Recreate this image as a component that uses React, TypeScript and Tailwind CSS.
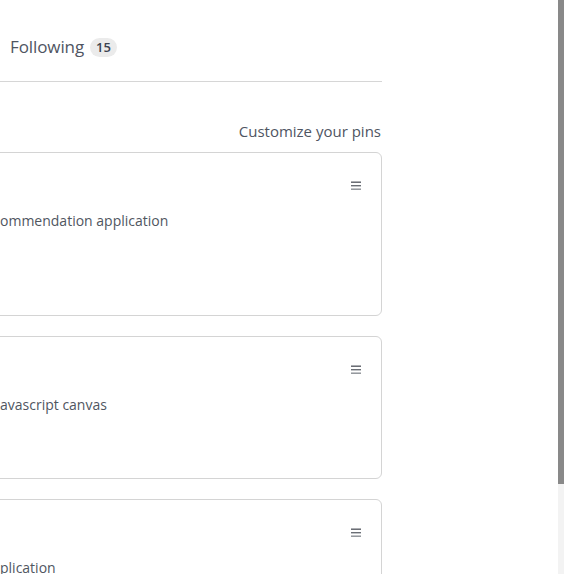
import React from 'react';

const pins = [
  { text: 'ommendation application', height: 'h-[164px]' },
  { text: 'avascript canvas', height: 'h-[143px]' },
  { text: 'plication', height: 'h-[143px]' },
];

const Grabber = () => (
  <svg width="10" height="10" viewBox="0 0 10 10" className="shrink-0">
    <rect x="0" y="0.5" width="10" height="1.4" fill="#5b5f66" />
    <rect x="0" y="4" width="10" height="1.4" fill="#6a6e75" />
    <rect x="0" y="7.5" width="10" height="1.4" fill="#8a8e94" />
  </svg>
);

const App: React.FC = () => {
  return (
    <div
      className="flex h-[574px] w-full overflow-hidden bg-white text-[#4f5562]"
      style={{ fontFamily: '"Open Sans", "Noto Sans", sans-serif' }}
    >
      <div className="flex w-[382px] shrink-0 flex-col">
        {/* Tabs */}
        <div className="flex h-[82px] shrink-0 items-center border-b border-[#d6d6d6] pt-[13px] pl-[10px]">
          <span className="text-[17px] tracking-[-0.1px]">Following</span>
          <span className="ml-[6px] rounded-full bg-[#ebebeb] px-[6px] py-[1px] text-[13px] font-semibold leading-[17px] text-[#3d4350]">
            15
          </span>
        </div>

        {/* Pinned header */}
        <div className="mt-[38px] flex shrink-0 justify-end pr-[1px] text-[15px] leading-[22px]">
          Customize your pins
        </div>

        {/* Pins */}
        <div className="mt-[10px] flex shrink-0 flex-col gap-[20px]">
          {pins.map((p, i) => (
            <div
              key={i}
              className={`-ml-[8px] ${p.height} shrink-0 rounded-[6px] border border-[#d4d4d4] pr-[20px] pt-[28px]`}
            >
              <div className="flex justify-end">
                <Grabber />
              </div>
              <div className="mt-[20px] pl-[7px] text-[14px] leading-[20px] text-[#50565f]">{p.text}</div>
            </div>
          ))}
        </div>
      </div>

      <div className="flex-1" />

      {/* Scrollbar */}
      <div className="flex w-[6px] shrink-0 flex-col">
        <div className="h-[484px] shrink-0 bg-[#898989]" />
        <div className="flex-1 bg-[#f3f3f3]" />
      </div>
    </div>
  );
};

export default App;
